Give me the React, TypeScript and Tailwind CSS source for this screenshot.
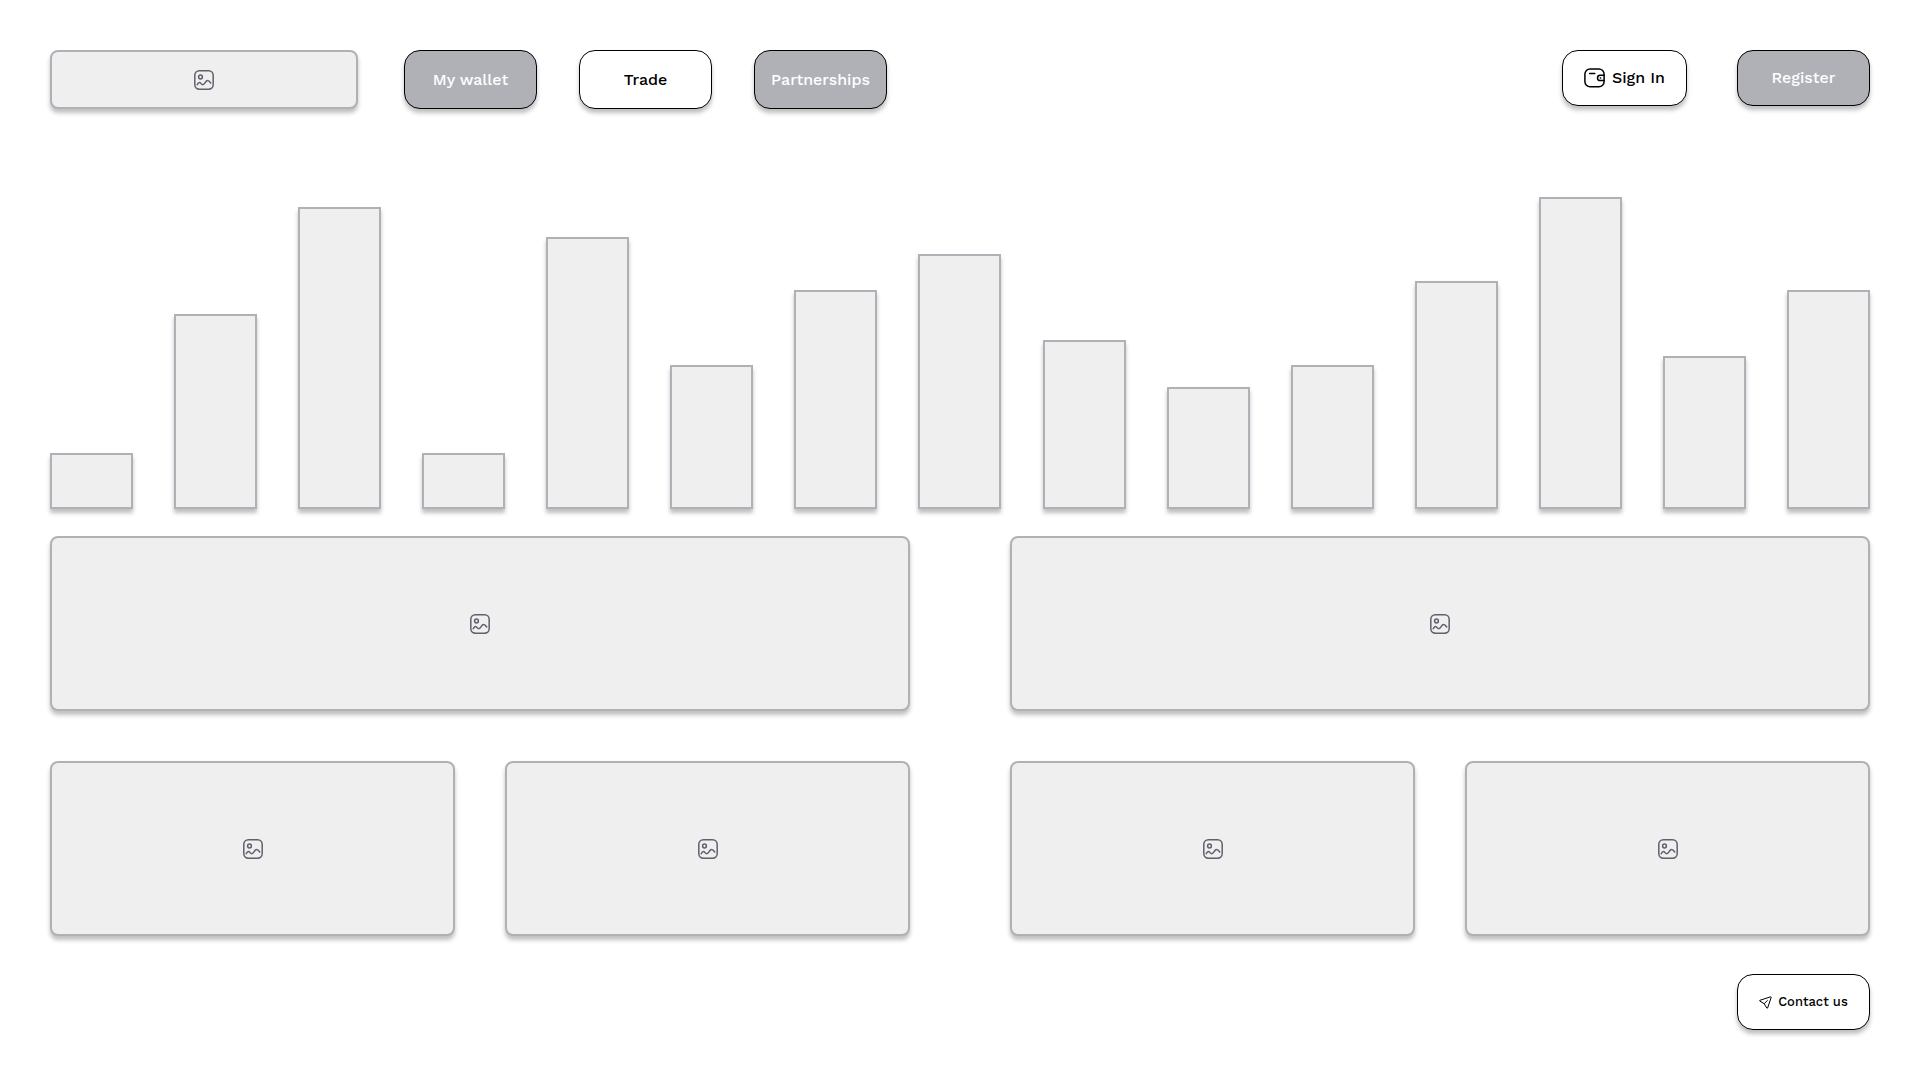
import React from "react";

const bars = [56, 195, 302, 56, 272, 144, 219, 255, 169, 122, 144, 228, 312, 153, 219];

const shadow = "shadow-[0_4px_4px_rgba(0,0,0,0.25)]";

function ImageIcon() {
  return (
    <svg className="size-5" viewBox="0 0 20 20" fill="none" stroke="#5f616d" strokeWidth="1.5" strokeLinecap="round" strokeLinejoin="round" aria-hidden="true">
      <rect x="0.8" y="0.8" width="18.4" height="18.4" rx="4.6" />
      <circle cx="6.5" cy="7" r="1.9" />
      <path d="M3.2 14.8C3.9 13.2 4.6 12.5 5.4 12.5C6.9 12.5 7.2 14.7 8.7 14.7C11 14.7 11.3 10.5 13.5 10.5C15 10.5 15.8 11.6 16.7 13" />
    </svg>
  );
}

function WalletIcon() {
  return (
    <svg className="h-5 w-[21px]" viewBox="0 0 21 20" fill="none" stroke="currentColor" strokeWidth="1.5" strokeLinecap="round" strokeLinejoin="round" aria-hidden="true">
      <path d="M20 12.6H16.2A2.7 2.7 0 0 1 16.2 7.2H20" />
      <path d="M16.6 9.9H16.3" />
      <path d="M5.7 5.5H10.8" />
      <rect x="0.9" y="0.9" width="19.2" height="17.9" rx="5.2" />
    </svg>
  );
}

function SendIcon() {
  return (
    <svg className="size-[13px]" viewBox="0 0 13 13" fill="none" stroke="currentColor" strokeWidth="1" strokeLinecap="round" strokeLinejoin="round" aria-hidden="true">
      <path d="M5.2 7.7L7.8 12.1C8 12.5 8.5 12.4 8.6 12L12.2 1.4C12.3 1 12 0.7 11.6 0.8L0.9 4.3C0.5 4.4 0.5 4.9 0.8 5.1L5.2 7.7L8.4 4.5" />
    </svg>
  );
}

function Panel({ label, className }: { label: string; className: string }) {
  return (
    <div role="img" aria-label={label} className={`flex items-center justify-center rounded-lg border-2 border-[#b0b0b7] bg-[#efefef] ${shadow} ${className}`}>
      <ImageIcon />
    </div>
  );
}

function Button({ children, filled, className }: { children: React.ReactNode; filled?: boolean; className: string }) {
  return (
    <button
      type="button"
      className={`flex items-center justify-center rounded-2xl border border-black font-medium ${shadow} ${filled ? "bg-[#b0b0b7] text-white" : "bg-white text-black"} ${className}`}
    >
      {children}
    </button>
  );
}

export default function App() {
  return (
    <div className="min-h-screen bg-white p-[50px] font-['Work_Sans',Inter,sans-serif] text-base">
      <header className="flex items-start justify-between">
        <div className="flex items-center gap-[46px]">
          <Panel label="Logo" className="h-[59px] w-[308px]" />
          <nav aria-label="Main" className="flex gap-[42px]">
            <Button filled className="h-[59px] w-[133px]">My wallet</Button>
            <Button className="h-[59px] w-[133px]">Trade</Button>
            <Button filled className="h-[59px] w-[133px]">Partnerships</Button>
          </nav>
        </div>
        <div className="flex gap-[50px]">
          <Button className="h-14 w-[125px] gap-[7px]">
            <WalletIcon />
            Sign In
          </Button>
          <Button filled className="h-14 w-[133px]">Register</Button>
        </div>
      </header>

      <main>
        <div role="img" aria-label="Bar chart" className="mt-[88px] flex items-end justify-between">
          {bars.map((height, i) => (
            <div key={i} className={`w-[83px] border-2 border-[#b0b0b7] bg-[#efefef] ${shadow}`} style={{ height }} />
          ))}
        </div>

        <div className="mt-[27px] grid grid-cols-2 gap-x-[100px] gap-y-[50px]">
          <Panel label="Feature one" className="h-[175px]" />
          <Panel label="Feature two" className="h-[175px]" />
          <div className="grid grid-cols-2 gap-[50px]">
            <Panel label="Card one" className="h-[175px]" />
            <Panel label="Card two" className="h-[175px]" />
          </div>
          <div className="grid grid-cols-2 gap-[50px]">
            <Panel label="Card three" className="h-[175px]" />
            <Panel label="Card four" className="h-[175px]" />
          </div>
        </div>
      </main>

      <footer className="mt-[38px] flex justify-end">
        <Button className="h-14 w-[133px] gap-1.5 text-[13px]">
          <SendIcon />
          Contact us
        </Button>
      </footer>
    </div>
  );
}
